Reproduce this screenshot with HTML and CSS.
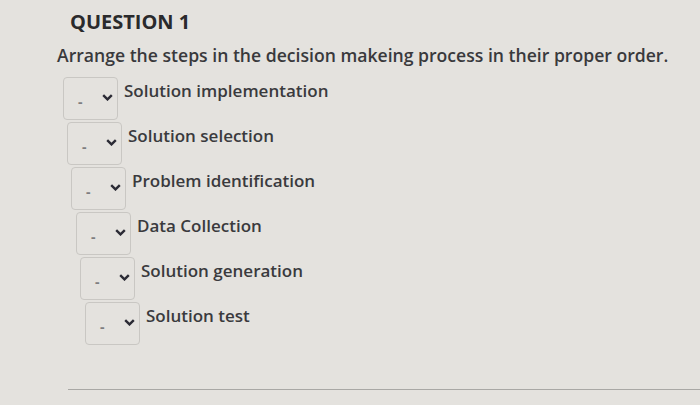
FILE: index.html
```html
<!DOCTYPE html>
<html>
<head>
<meta charset="utf-8">
<link rel="stylesheet" href="styles.css">
</head>
<body>
<div class="page">
  <h1 class="title">QUESTION 1</h1>
  <p class="prompt">Arrange the steps in the decision makeing process in their proper order.</p>
  <ul class="steps">
    <li class="step s1"><span class="box"><span class="dash">-</span><svg class="chev" viewBox="0 0 11 7"><path d="M1.2 1.2 L5.5 5.4 L9.8 1.2" /></svg></span><span class="label">Solution implementation</span></li>
    <li class="step s2"><span class="box"><span class="dash">-</span><svg class="chev" viewBox="0 0 11 7"><path d="M1.2 1.2 L5.5 5.4 L9.8 1.2" /></svg></span><span class="label">Solution selection</span></li>
    <li class="step s3"><span class="box"><span class="dash">-</span><svg class="chev" viewBox="0 0 11 7"><path d="M1.2 1.2 L5.5 5.4 L9.8 1.2" /></svg></span><span class="label">Problem identification</span></li>
    <li class="step s4"><span class="box"><span class="dash">-</span><svg class="chev" viewBox="0 0 11 7"><path d="M1.2 1.2 L5.5 5.4 L9.8 1.2" /></svg></span><span class="label">Data Collection</span></li>
    <li class="step s5"><span class="box"><span class="dash">-</span><svg class="chev" viewBox="0 0 11 7"><path d="M1.2 1.2 L5.5 5.4 L9.8 1.2" /></svg></span><span class="label">Solution generation</span></li>
    <li class="step s6"><span class="box"><span class="dash">-</span><svg class="chev" viewBox="0 0 11 7"><path d="M1.2 1.2 L5.5 5.4 L9.8 1.2" /></svg></span><span class="label">Solution test</span></li>
  </ul>
  <div class="rule"></div>
</div>
</body>
</html>
```
FILE: styles.css
```css
html, body {
  margin: 0;
  padding: 0;
}
body {
  width: 700px;
  height: 405px;
  overflow: hidden;
  background: #e4e2de;
  font-family: "Open Sans", "Liberation Sans", sans-serif;
  color: #333336;
}
.page {
  padding-top: 9px;
}
.title {
  margin: 0 0 0 70px;
  font-size: 20px;
  font-weight: 700;
  line-height: 26px;
  color: #2a2a2c;
}
.prompt {
  margin: 8px 0 0 57px;
  font-size: 17.6px;
  font-weight: 600;
  line-height: 24px;
  color: #39393c;
}
.steps {
  list-style: none;
  margin: 10px 0 0 0;
  padding: 0;
  display: flex;
  flex-direction: column;
  gap: 2px;
}
.step {
  display: flex;
  align-items: flex-start;
}
.s1 { margin-left: 63px; }
.s2 { margin-left: 67px; }
.s3 { margin-left: 71px; }
.s4 { margin-left: 76px; }
.s5 { margin-left: 80px; }
.s6 { margin-left: 85px; }
.box {
  box-sizing: border-box;
  width: 55px;
  height: 43px;
  border: 1px solid #c9c7c3;
  border-radius: 4px;
  display: flex;
  align-items: center;
  padding-left: 14px;
}
.dash {
  font-size: 14px;
  font-weight: 700;
  color: #7e7e80;
  margin-top: 6px;
}
.chev {
  width: 11px;
  height: 7px;
  margin-left: 19px;
  margin-bottom: 2px;
  fill: none;
  stroke: #2b2b35;
  stroke-width: 2.4;
}
.label {
  margin-left: 6px;
  margin-top: 2px;
  font-size: 17px;
  line-height: 24px;
  font-weight: 600;
  color: #3a3a3d;
}
.rule {
  margin: 44px 0 0 68px;
  height: 1px;
  background: #a9a8a5;
}
```
